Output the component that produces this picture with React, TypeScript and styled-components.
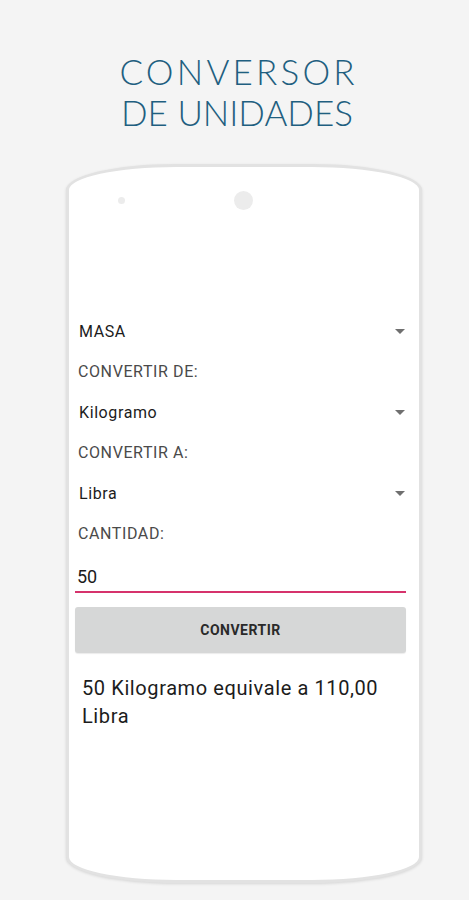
import styled, { createGlobalStyle } from "styled-components";

const GlobalStyle = createGlobalStyle`
  body {
    margin: 0;
    background: #f4f4f4;
    font-family: Roboto, "Liberation Sans", sans-serif;
  }
`;

const Page = styled.div`
  width: 469px;
  height: 900px;
  overflow: hidden;
  display: flex;
  flex-direction: column;
  align-items: flex-start;
`;

const Title = styled.h1`
  align-self: center;
  margin: 51px 0 0;
  padding-left: 5px;
  display: flex;
  flex-direction: column;
  align-items: center;
  font-family: Lato, "Open Sans", sans-serif;
  font-weight: 300;
  font-size: 35px;
  line-height: 41px;
  color: #1f5f80;
`;

const TitleLine = styled.span<{ spacing: number }>`
  letter-spacing: ${(p) => p.spacing}px;
  margin-right: -${(p) => p.spacing}px;
`;

const Phone = styled.div`
  margin: 31px 0 0 66px;
  width: 356px;
  height: 719px;
  box-sizing: border-box;
  background: #fff;
  border: 3px solid #e2e2e2;
  border-radius: 110px / 26px;
  box-shadow: 0 1px 3px rgba(0, 0, 0, 0.12);
  display: flex;
  flex-direction: column;
`;

const Top = styled.div`
  height: 144px;
  position: relative;
`;

const Dot = styled.span<{ size: number; left: number; top: number }>`
  position: absolute;
  width: ${(p) => p.size}px;
  height: ${(p) => p.size}px;
  left: ${(p) => p.left}px;
  top: ${(p) => p.top}px;
  border-radius: 50%;
  background: #ececec;
`;

const Screen = styled.div`
  padding: 0 13px 0 6px;
  display: flex;
  flex-direction: column;
`;

const Row = styled.div`
  height: 40.5px;
  display: flex;
  align-items: center;
  justify-content: space-between;
  padding: 0 1px 0 4px;
  font-size: 16px;
  letter-spacing: 0.6px;
  color: #1c1c1c;
`;

const Label = styled(Row)`
  padding-left: 3px;
  color: #4a4a4a;
`;

const Arrow = styled.span`
  width: 0;
  height: 0;
  border-left: 5px solid transparent;
  border-right: 5px solid transparent;
  border-top: 5px solid #6f6f6f;
`;

const Input = styled.div`
  box-sizing: border-box;
  height: 39px;
  display: flex;
  align-items: center;
  padding: 7px 0 0 2px;
  font-size: 18px;
  color: #1a1a1a;
  border-bottom: 2px solid #d6336c;
`;

const Button = styled.div`
  margin-top: 14px;
  height: 46px;
  border-radius: 3px;
  background: #d6d7d7;
  box-shadow: 0 1px 1px rgba(0, 0, 0, 0.08);
  display: flex;
  align-items: center;
  justify-content: center;
  font-size: 14px;
  font-weight: 700;
  letter-spacing: 0.5px;
  color: #2a2a2a;
`;

const Result = styled.p`
  margin: 21px 0 0 7px;
  font-size: 20px;
  line-height: 28px;
  letter-spacing: 0.6px;
  color: #1c1c1c;
`;

const spinners = [
  { label: null, value: "MASA" },
  { label: "CONVERTIR DE:", value: "Kilogramo" },
  { label: "CONVERTIR A:", value: "Libra" },
];

export default function App() {
  return (
    <>
      <GlobalStyle />
      <Page>
        <Title>
          <TitleLine spacing={3.2}>CONVERSOR</TitleLine>
          <TitleLine spacing={0}>DE UNIDADES</TitleLine>
        </Title>
        <Phone>
          <Top>
            <Dot size={7} left={49} top={30} />
            <Dot size={19} left={165} top={24} />
          </Top>
          <Screen>
            {spinners.map((s) => (
              <div key={s.value}>
                {s.label && <Label>{s.label}</Label>}
                <Row>
                  {s.value}
                  <Arrow />
                </Row>
              </div>
            ))}
            <Label>CANTIDAD:</Label>
            <Input>50</Input>
            <Button>CONVERTIR</Button>
            <Result>
              50 Kilogramo equivale a 110,00
              <br />
              Libra
            </Result>
          </Screen>
        </Phone>
      </Page>
    </>
  );
}
